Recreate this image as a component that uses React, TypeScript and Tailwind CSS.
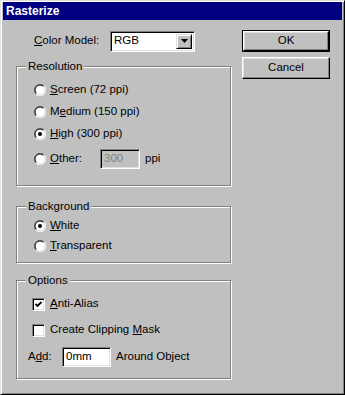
import type { ReactNode } from "react";

function Radio({ checked }: { checked?: boolean }) {
  return (
    <svg width="12" height="12" viewBox="0 0 12 12" className="shrink-0">
      <circle cx="6" cy="6" r="5" fill="white" />
      <path d="M10.24 1.76 A6 6 0 0 0 1.76 10.24" stroke="#808080" strokeWidth="1" fill="none" />
      <path d="M1.76 10.24 A6 6 0 0 0 10.24 1.76" stroke="white" strokeWidth="1" fill="none" />
      <path d="M9.54 2.46 A5 5 0 0 0 2.46 9.54" stroke="black" strokeWidth="1" fill="none" />
      <path d="M2.46 9.54 A5 5 0 0 0 9.54 2.46" stroke="#dfdfdf" strokeWidth="1" fill="none" />
      {checked && <circle cx="6" cy="6" r="2" fill="black" />}
    </svg>
  );
}

function Checkbox({ checked }: { checked?: boolean }) {
  return (
    <div className="w-[13px] h-[13px] shrink-0 bg-white border border-t-[#808080] border-l-[#808080] border-r-white border-b-white shadow-[inset_1px_1px_0_#000,inset_-1px_-1px_0_#dfdfdf] flex items-center justify-center">
      {checked && (
        <svg width="9" height="9" viewBox="0 0 9 9">
          <path d="M1.5 4 L3.5 6 L7.5 2" stroke="black" strokeWidth="1.8" fill="none" />
        </svg>
      )}
    </div>
  );
}

function Group({ title, className, children }: { title: string; className: string; children: ReactNode }) {
  return (
    <div
      className={
        "relative w-[215px] border border-[#808080] shadow-[inset_1px_1px_0_white,1px_1px_0_white] " + className
      }
    >
      <span className="absolute left-[9px] top-[-8px] px-[2px] bg-[#c0c0c0] leading-[14px]">{title}</span>
      {children}
    </div>
  );
}

function Field({ value, disabled, w }: { value: string; disabled?: boolean; w: string }) {
  return (
    <div
      className={
        "h-[20px] border border-t-[#808080] border-l-[#808080] border-r-white border-b-white shadow-[inset_1px_1px_0_#000,inset_-1px_-1px_0_#dfdfdf] flex items-center pl-[3px] " +
        w +
        (disabled ? " bg-[#c0c0c0] text-[#808080]" : " bg-white")
      }
    >
      {value}
    </div>
  );
}

function Button({ label, primary }: { label: string; primary?: boolean }) {
  return (
    <div className={"w-[88px] h-[22px] " + (primary ? "border border-black" : "")}>
      <div className="w-full h-full bg-[#c0c0c0] border border-t-white border-l-white border-r-black border-b-black shadow-[inset_-1px_-1px_0_#808080,inset_1px_1px_0_#dfdfdf] flex items-center justify-center">
        {label}
      </div>
    </div>
  );
}

export default function App() {
  return (
    <div className="w-[345px] h-[395px] bg-[#c0c0c0] border border-t-[#dfdfdf] border-l-[#dfdfdf] border-r-black border-b-black shadow-[inset_1px_1px_0_white,inset_-1px_-1px_0_#808080] px-[2px] pt-[1px] font-['Liberation_Sans',Arial,sans-serif] text-[11.5px] text-black leading-none select-none">
      <div className="h-[18px] bg-[#000080] text-white font-bold text-[12px] pl-[3px] flex items-center">
        Rasterize
      </div>
      <div className="flex pt-[10px] pl-[13px]">
        <div className="w-[215px] flex flex-col">
          <div className="h-[22px] flex items-center pl-[18px]">
            <span className="w-[76px]">
              <span className="underline">C</span>olor Model:
            </span>
            <div className="w-[85px] h-[21px] bg-white border border-t-[#808080] border-l-[#808080] border-r-white border-b-white shadow-[inset_1px_1px_0_#000,inset_-1px_-1px_0_#dfdfdf] flex items-center p-[2px]">
              <span className="flex-1 pl-[1px]">RGB</span>
              <div className="w-[16px] h-full bg-[#c0c0c0] border border-t-[#dfdfdf] border-l-[#dfdfdf] border-r-black border-b-black shadow-[inset_1px_1px_0_white,inset_-1px_-1px_0_#808080] flex items-center justify-center">
                <svg width="7" height="4" viewBox="0 0 7 4">
                  <path d="M0 0 H7 L3.5 4 Z" fill="black" />
                </svg>
              </div>
            </div>
          </div>

          <Group title="Resolution" className="mt-[14px] h-[120px] pt-[12px] pl-[17px]">
            <div className="h-[22px] flex items-center gap-[4px]">
              <Radio />
              <span>
                <span className="underline">S</span>creen (72 ppi)
              </span>
            </div>
            <div className="h-[22px] flex items-center gap-[4px]">
              <Radio />
              <span>
                M<span className="underline">e</span>dium (150 ppi)
              </span>
            </div>
            <div className="h-[22px] flex items-center gap-[4px]">
              <Radio checked />
              <span>
                <span className="underline">H</span>igh (300 ppi)
              </span>
            </div>
            <div className="mt-[4px] h-[20px] flex items-center">
              <Radio />
              <span className="ml-[4px] w-[50px]">
                <span className="underline">O</span>ther:
              </span>
              <Field value="300" disabled w="w-[40px]" />
              <span className="ml-[5px]">ppi</span>
            </div>
          </Group>

          <Group title="Background" className="mt-[20px] h-[57px] pt-[9px] pl-[17px]">
            <div className="h-[20px] flex items-center gap-[4px]">
              <Radio checked />
              <span>
                <span className="underline">W</span>hite
              </span>
            </div>
            <div className="h-[20px] flex items-center gap-[4px]">
              <Radio />
              <span>
                <span className="underline">T</span>ransparent
              </span>
            </div>
          </Group>

          <Group title="Options" className="mt-[17px] h-[99px] pt-[12px] pl-[15px]">
            <div className="h-[22px] flex items-center gap-[5px]">
              <Checkbox checked />
              <span>
                <span className="underline">A</span>nti-Alias
              </span>
            </div>
            <div className="mt-[4px] h-[22px] flex items-center gap-[5px]">
              <Checkbox />
              <span>
                Create Clipping <span className="underline">M</span>ask
              </span>
            </div>
            <div className="mt-[6px] h-[20px] flex items-center -ml-[4px]">
              <span className="w-[34px]">
                A<span className="underline">d</span>d:
              </span>
              <Field value="0mm" w="w-[49px]" />
              <span className="ml-[5px]">Around Object</span>
            </div>
          </Group>
        </div>

        <div className="ml-[11px] flex flex-col gap-[5px]">
          <Button label="OK" primary />
          <Button label="Cancel" />
        </div>
      </div>
    </div>
  );
}
